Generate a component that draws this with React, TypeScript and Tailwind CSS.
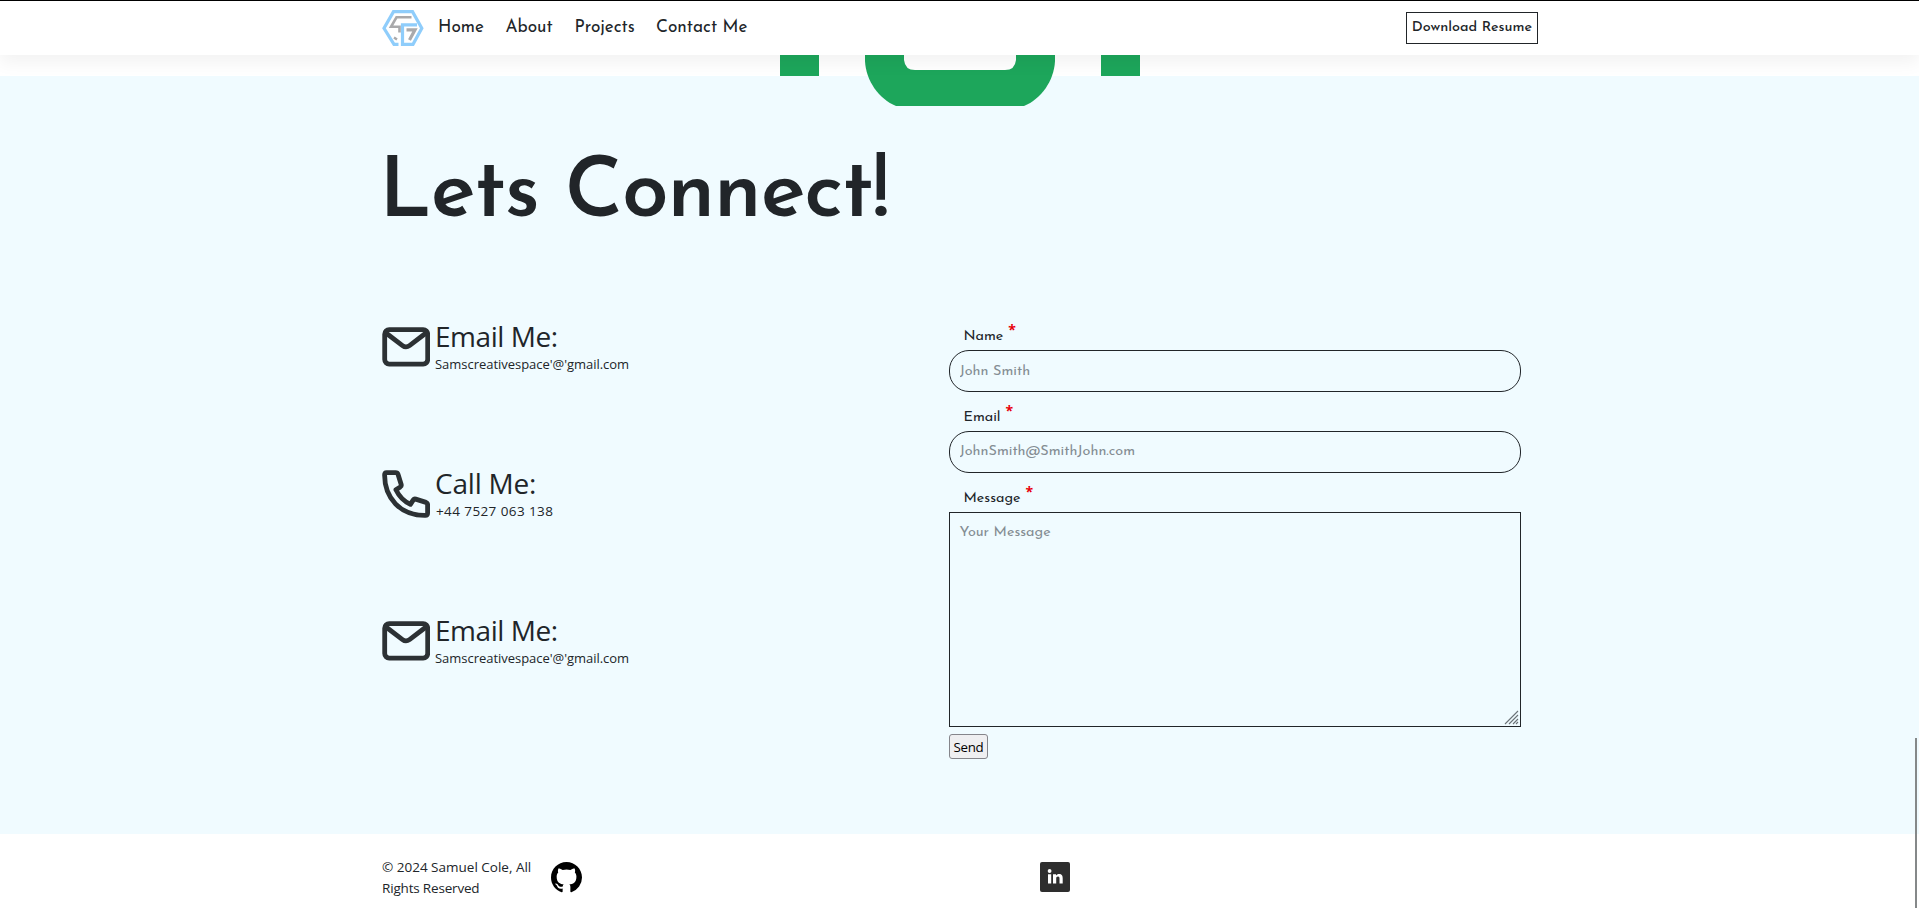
import React from "react";

const JOSEFIN = "font-['Josefin_Sans','Lato',sans-serif]";

function Logo() {
  return (
    <svg width="42" height="37" viewBox="0 0 42 37" fill="none" className="shrink-0">
      <path d="M16.500 34.300H12L2 18.300L11.500 1.700H30.500L39.800 18.300L31 34.300H20.500V14.800H35" stroke="#8fcdfb" strokeWidth="3.2" />
      <path d="M29.500 7.300H14.500L9 16.800H17.500V22.500" stroke="#a9a9ab" strokeWidth="2.6" />
      <path d="M24.500 19.800H33L27.500 30" stroke="#a9a9ab" strokeWidth="3.2" />
      <path d="M12 27.500L15 29.500" stroke="#a9a9ab" strokeWidth="2.4" />
    </svg>
  );
}

function MailIcon() {
  return (
    <svg width="48" height="40" viewBox="0 0 48 40" fill="none" stroke="#2c3134" strokeWidth="4.8" strokeLinecap="round" strokeLinejoin="round" className="shrink-0">
      <rect x="2.7" y="2.7" width="43" height="34.4" rx="4.5" />
      <path d="M4 6L20.500 18.600Q24 21.200 27.500 18.600L44 6" />
    </svg>
  );
}

function PhoneIcon() {
  return (
    <svg width="48" height="48" viewBox="0 0 48 48" fill="none" stroke="#2c3134" strokeWidth="4.8" strokeLinejoin="round" className="shrink-0">
      <path d="M4.600 2.600H13.600Q15.400 2.600 16 4.300L19.200 14.500Q19.600 16 18.300 16.900L13.900 19.800C17.400 27 21.500 31.200 28.400 34.400L31.300 29.900Q32.200 28.600 33.700 29.100L44 32.400Q45.600 33 45.600 34.600V43.100Q45.600 45.400 43.400 45.400C18 45.800 2.600 27.500 2.600 5Q2.600 2.600 4.600 2.600Z" />
    </svg>
  );
}

function GithubIcon() {
  return (
    <svg width="31" height="31" viewBox="0 0 16 16" fill="#000" className="mt-[28px] shrink-0">
      <path d="M8 0C3.58 0 0 3.58 0 8c0 3.54 2.29 6.53 5.47 7.59.4.07.55-.17.55-.38 0-.19-.01-.82-.01-1.49-2.01.37-2.53-.49-2.69-.94-.09-.23-.48-.94-.82-1.13-.28-.15-.68-.52-.01-.53.63-.01 1.08.58 1.23.82.72 1.21 1.87.87 2.33.66.07-.52.28-.87.51-1.07-1.78-.2-3.64-.89-3.64-3.95 0-.87.31-1.59.82-2.15-.08-.2-.36-1.02.08-2.12 0 0 .67-.21 2.2.82a7.6 7.6 0 0 1 4 0c1.53-1.04 2.2-.82 2.2-.82.44 1.1.16 1.92.08 2.12.51.56.82 1.27.82 2.15 0 3.07-1.87 3.75-3.65 3.95.29.25.54.73.54 1.48 0 1.07-.01 1.93-.01 2.2 0 .21.15.46.55.38A8.01 8.01 0 0 0 16 8c0-4.42-3.58-8-8-8z" />
    </svg>
  );
}

function LinkedinIcon() {
  return (
    <svg width="30" height="30" viewBox="0 0 30 30" className="mt-[28px] shrink-0">
      <rect width="30" height="30" rx="2" fill="#2e2e2e" />
      <circle cx="9.6" cy="9" r="1.9" fill="#fff" />
      <path d="M8 12.2h3.2V21.5H8zM13 12.2h3v1.3c.6-1 1.7-1.6 3-1.6 2.9 0 3.7 1.8 3.7 4.4v5.2h-3.2v-4.7c0-1.2-.2-2.2-1.5-2.2s-1.8.9-1.8 2.2v4.7H13z" fill="#fff" />
    </svg>
  );
}

function Contact({ icon, title, children }: { icon: React.ReactNode; title: React.ReactNode; children: React.ReactNode }) {
  return (
    <div className="flex h-[147px] items-start font-['Segoe_UI','Open_Sans',sans-serif] text-[#212529]">
      <div className="-mt-[3px] flex h-[55px] w-[53px] items-center">{icon}</div>
      <div>
        <div className="-mt-px h-[32px] text-[28px] leading-[31px] tracking-[-0.45px]">{title}</div>
        <div className="text-[13px] leading-[22px]">{children}</div>
      </div>
    </div>
  );
}

function Label({ children }: { children: React.ReactNode }) {
  return (
    <label className="flex h-[26px] items-start pt-[2px] pl-[14.5px] text-[14.4px] leading-[22px] font-normal text-[#212529]">
      {children}
      <span className="-mt-[7px] ml-[5px] font-['Open_Sans',sans-serif] text-[14px] font-bold text-[#e8000b]">*</span>
    </label>
  );
}

const field =
  "block w-[572px] border border-[#212529] bg-transparent px-[9.5px] text-[14.4px] font-normal outline-none placeholder:text-[#848d93]";

export default function App() {
  return (
    <div className="relative flex h-[918px] w-full flex-col overflow-hidden bg-white">
      <header className={`relative z-10 h-[55px] shrink-0 border-t border-black bg-white shadow-[0_8px_16px_rgba(0,0,0,0.05)] ${JOSEFIN}`}>
        <div className="flex h-[54px] items-start pl-[382px] text-[#212529]">
          <div className="mt-[9px] w-[56px]"><Logo /></div>
          <nav className="mt-[15px] flex text-[17.2px] leading-[24px] font-normal">
            <a className="w-[67.5px]">Home</a>
            <a className="w-[69px]">About</a>
            <a className="w-[81.5px]">Projects</a>
            <a className="whitespace-nowrap">Contact Me</a>
          </nav>
          <a className="mt-[11px] mr-[381px] ml-auto flex h-[32px] w-[132px] items-center justify-center border border-[#212529] text-[14.4px] font-medium whitespace-nowrap">
            Download Resume
          </a>
        </div>
      </header>

      <div className="h-[21px] shrink-0 bg-white" />

      <main className="relative h-[758px] shrink-0 bg-[#f0fbff]">
        <svg width="360" height="51" viewBox="0 0 360 51" className="absolute -top-[21px] left-[780px]">
          <path d="M0 0H39V21H0zM321 0H360V21H321z" fill="#1da65b" />
          <path d="M85 0H275V6C274 26 261 44 244 51H116C99 44 86 26 85 6z" fill="#1da65b" />
          <path d="M124 0H236V5Q235 15 225 15H135Q125 15 124 5z" fill="#ffffff" />
        </svg>

        <div className="pl-[382px]">
          <h1 className={`-ml-[3px] h-[246px] pt-[69px] text-[84px] leading-[100px] font-semibold tracking-[-1.15px] whitespace-nowrap text-[#212529] ${JOSEFIN}`}>
            Lets Connect!
          </h1>
          <div className="flex">
            <section className="w-[567px]">
              <Contact icon={<MailIcon />} title="Email Me:">
                <span className="tracking-[-0.03px]">Samscreativespace'@'gmail.com</span>
              </Contact>
              <Contact icon={<PhoneIcon />} title={<span className="tracking-[-0.2px]">Call Me:</span>}>
                <span className="pl-[1px] text-[13.5px] tracking-[0.4px]">+44 7527 063 138</span>
              </Contact>
              <Contact icon={<MailIcon />} title="Email Me:">
                <span className="tracking-[-0.03px]">Samscreativespace'@'gmail.com</span>
              </Contact>
            </section>
            <form className={`pt-[2px] ${JOSEFIN}`}>
              <div className="h-[81px]">
                <Label>Name</Label>
                <input className={`${field} h-[42px] rounded-[20px]`} placeholder="John Smith" />
              </div>
              <div className="h-[81px]">
                <Label>Email</Label>
                <input className={`${field} h-[42px] rounded-[20px] pb-[1px]`} placeholder="JohnSmith@SmithJohn.com" />
              </div>
              <Label>Message</Label>
              <div className="relative">
                <textarea className={`${field} h-[215px] resize-none pt-[9px]`} placeholder="Your Message" />
                <svg width="15" height="15" viewBox="0 0 15 15" stroke="#6b7377" strokeWidth="1.1" className="absolute right-[2px] bottom-[2px]">
                  <path d="M1 14L14 1M5 14L14 5M9 14L14 9M12 14L14 12" />
                </svg>
              </div>
              <button type="button" className="mt-[7px] flex h-[25px] w-[39px] items-center justify-center rounded-[3px] border border-[#85858b] bg-[#efeff1] pt-[2px] font-['Segoe_UI','Open_Sans',sans-serif] text-[13.3px] tracking-[-0.3px] text-black">
                Send
              </button>
            </form>
          </div>
        </div>
      </main>

      <footer className="flex h-[84px] shrink-0 items-start pl-[382px] font-['Segoe_UI','Open_Sans',sans-serif] text-[#212529]">
        <p className="mt-[23px] w-[169px] text-[13.5px] leading-[21px] whitespace-nowrap">
          © 2024 Samuel Cole, All<br /><span className="tracking-[-0.18px]">Rights Reserved</span>
        </p>
        <div className="w-[489px]"><GithubIcon /></div>
        <LinkedinIcon />
      </footer>

      <div className="absolute top-[738px] right-[2px] z-20 h-[170px] w-[2px] bg-[#858889]" />
    </div>
  );
}
